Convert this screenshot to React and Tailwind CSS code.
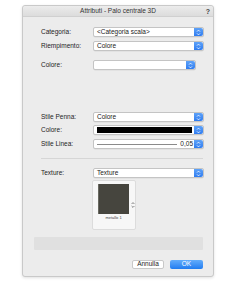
import React from 'react';

const font = { fontFamily: '"Liberation Sans", Arial, sans-serif' };

function Stepper() {
  return (
    <div className="flex h-full w-[9px] shrink-0 items-center justify-center rounded-r-[2px] bg-gradient-to-b from-[#5ea2f8] to-[#2f7cf0]">
      <svg width="5" height="7" viewBox="0 0 5 7">
        <path d="M1 2.6 L2.5 1.1 L4 2.6 M1 4.4 L2.5 5.9 L4 4.4" fill="none" stroke="white" strokeWidth="0.8" />
      </svg>
    </div>
  );
}

function Select({ children, width = 'w-[111px]' }) {
  return (
    <div className={`flex h-[10px] ${width} items-stretch rounded-[2px] border border-[#c4c4c4] bg-white shadow-[0_0.5px_0_rgba(0,0,0,0.08)]`}>
      <div className="flex min-w-0 flex-1 items-center overflow-hidden pl-[3px] text-[6.5px] leading-none text-[#222]">
        {children}
      </div>
      <Stepper />
    </div>
  );
}

function Row({ label, children, className = '' }) {
  return (
    <div className={`flex items-center ${className}`}>
      <div className="w-[52px] pl-[18px] text-[6.5px] leading-none text-[#1c1c1c] box-content">{label}</div>
      {children}
    </div>
  );
}

export default function App() {
  return (
    <div className="h-[288px] w-[242px] bg-white pl-[22px] pt-[5px]" style={font}>
      <div className="flex h-[272px] w-[192px] flex-col rounded-[3px] border border-[#c9c9c9] bg-[#ececec] shadow-[0_1px_3px_rgba(0,0,0,0.12)]">
        {/* title bar */}
        <div className="relative flex h-[11px] shrink-0 items-center justify-center rounded-t-[3px] border-b border-[#d0d0d0] bg-gradient-to-b from-[#ececec] to-[#dcdcdc] text-[6.5px] leading-none text-[#333]">
          Attributi - Palo centrale 3D
          <span className="absolute right-[3px] top-[2px] text-[7px] font-bold text-[#444]">?</span>
        </div>

        <Row label="Categoria:" className="mt-[10px]">
          <Select>&lt;Categoria scala&gt;</Select>
        </Row>
        <Row label="Riempimento:" className="mt-[4px]">
          <Select>Colore</Select>
        </Row>
        <Row label="Colore:" className="mt-[9px]">
          <Select width="w-[103px]"></Select>
        </Row>

        <Row label="Stile Penna:" className="mt-[42px]">
          <Select>Colore</Select>
        </Row>
        <Row label="Colore:" className="mt-[3px]">
          <Select>
            <div className="h-[6px] w-[95px] bg-black" />
          </Select>
        </Row>
        <Row label="Stile Linea:" className="mt-[4px]">
          <Select>
            <div className="flex w-full items-center gap-[3px] pr-[1px]">
              <div className="h-px flex-1 bg-[#8a8a8a]" />
              <span>0,05</span>
            </div>
          </Select>
        </Row>

        <div className="ml-[18px] mr-[10px] mt-[9px] h-px bg-[#d6d6d6]" />

        <Row label="Texture:" className="mt-[9px]">
          <Select>Texture</Select>
        </Row>

        <div className="ml-[69px] mt-[2px] flex h-[50px] w-[44px] flex-col rounded-[2px] border border-[#dcdcdc] bg-[#f7f7f7] pl-[5px] pt-[3px]">
          <div className="flex items-center gap-[2px]">
            <div className="h-[30px] w-[31px] border-l border-[#6a6a62] bg-[#46453e]" />
            <svg width="4" height="6" viewBox="0 0 4 6" className="mt-[12px]">
              <path d="M0.6 2 L2 0.6 L3.4 2 M0.6 4 L2 5.4 L3.4 4" fill="none" stroke="#555" strokeWidth="0.7" />
            </svg>
          </div>
          <div className="mt-[2px] w-[31px] text-center text-[4px] leading-none text-[#444]">metallo 1</div>
        </div>

        <div className="ml-[11px] mr-[10px] mt-[7px] h-[13px] rounded-[1px] bg-[#e0e0e0]" />

        <div className="mr-[10px] mt-[10px] flex justify-end gap-[6px]">
          <button className="flex h-[9px] w-[32px] items-center justify-center rounded-[2px] border border-[#c8c8c8] bg-white text-[6.5px] leading-none text-[#222]">
            Annulla
          </button>
          <button className="flex h-[9px] w-[33px] items-center justify-center rounded-[2px] bg-gradient-to-b from-[#62acfb] to-[#1f7cf0] text-[6.5px] leading-none text-white">
            OK
          </button>
        </div>
      </div>
    </div>
  );
}
